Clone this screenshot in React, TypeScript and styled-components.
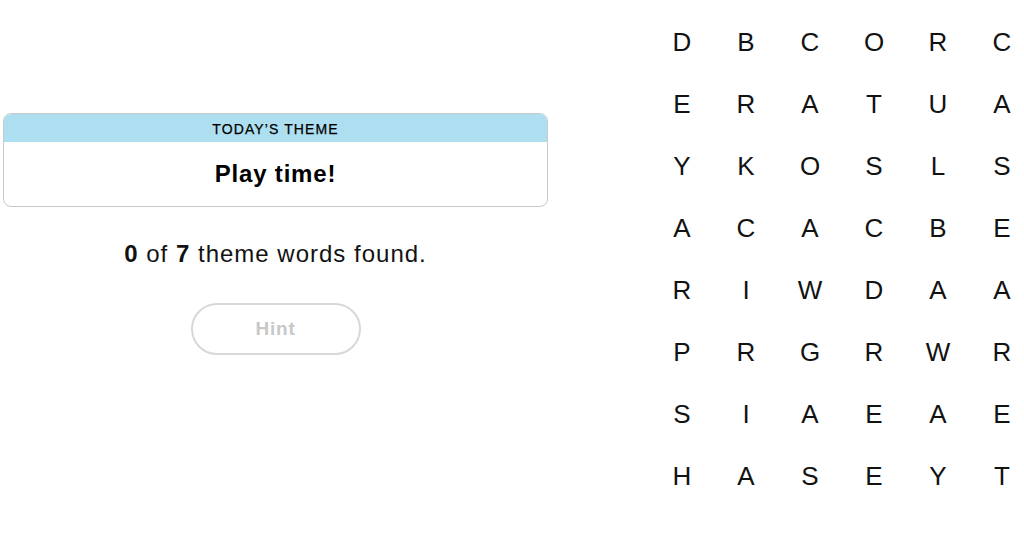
import React from "react";
import styled, { createGlobalStyle } from "styled-components";

const Global = createGlobalStyle`
  html, body { margin: 0; padding: 0; background: #fff; overflow: hidden; }
  body { font-family: "Liberation Sans", Arial, sans-serif; color: #121212; }
`;

const Page = styled.div`
  width: 1024px;
  height: 535px;
  display: flex;
  align-items: flex-start;
`;

const LeftColumn = styled.section`
  width: 545px;
  flex-shrink: 0;
  margin-left: 3px;
  padding-top: 113px;
  display: flex;
  flex-direction: column;
  align-items: center;
`;

const ThemeCard = styled.div`
  width: 100%;
  box-sizing: border-box;
  border: 1px solid #c9c9c9;
  border-radius: 8px;
  overflow: hidden;
`;

const ThemeHeader = styled.div`
  background: #aedff0;
  height: 28px;
  display: flex;
  align-items: center;
  justify-content: center;
  font-size: 14px;
  letter-spacing: 1.1px;
  text-transform: uppercase;
  color: #000;
  padding-top: 1px;
  box-sizing: border-box;
  -webkit-text-stroke: 0.25px #000;
`;

const ThemeTitle = styled.div`
  height: 64px;
  display: flex;
  align-items: center;
  justify-content: center;
  font-size: 24px;
  font-weight: 700;
  letter-spacing: 0.8px;
  color: #000;
`;

const Progress = styled.p`
  margin: 33px 0 0;
  font-size: 24px;
  letter-spacing: 1px;
  color: #121212;
  b { font-weight: 700; }
`;

const HintButton = styled.button`
  margin-top: 35px;
  width: 170px;
  height: 52px;
  border: 2px solid #d8d8d8;
  border-radius: 26px;
  background: #fff;
  color: #c8c8c8;
  font-family: "Liberation Sans", Arial, sans-serif;
  font-size: 19px;
  letter-spacing: 0.8px;
  font-weight: 700;
  cursor: default;
`;

const Board = styled.div`
  margin-left: 102px;
  margin-top: 11px;
  display: grid;
  grid-template-columns: repeat(6, 64px);
  grid-auto-rows: 62px;
  flex-shrink: 0;
`;

const Cell = styled.div`
  display: flex;
  align-items: center;
  justify-content: center;
  font-size: 26px;
  color: #121212;
  text-transform: uppercase;
`;

const rows = [
  "DBCORC",
  "ERATUA",
  "YKOSLS",
  "ACACBE",
  "RIWDAA",
  "PRGRWR",
  "SIAEAE",
  "HASEYT",
];

export default function App() {
  return (
    <>
      <Global />
      <Page>
        <LeftColumn>
          <ThemeCard>
            <ThemeHeader>Today’s theme</ThemeHeader>
            <ThemeTitle>Play time!</ThemeTitle>
          </ThemeCard>
          <Progress>
            <b>0</b> of <b>7</b> theme words found.
          </Progress>
          <HintButton>Hint</HintButton>
        </LeftColumn>
        <Board>
          {rows.flatMap((r, i) =>
            r.split("").map((ch, j) => <Cell key={`${i}-${j}`}>{ch}</Cell>)
          )}
        </Board>
      </Page>
    </>
  );
}
